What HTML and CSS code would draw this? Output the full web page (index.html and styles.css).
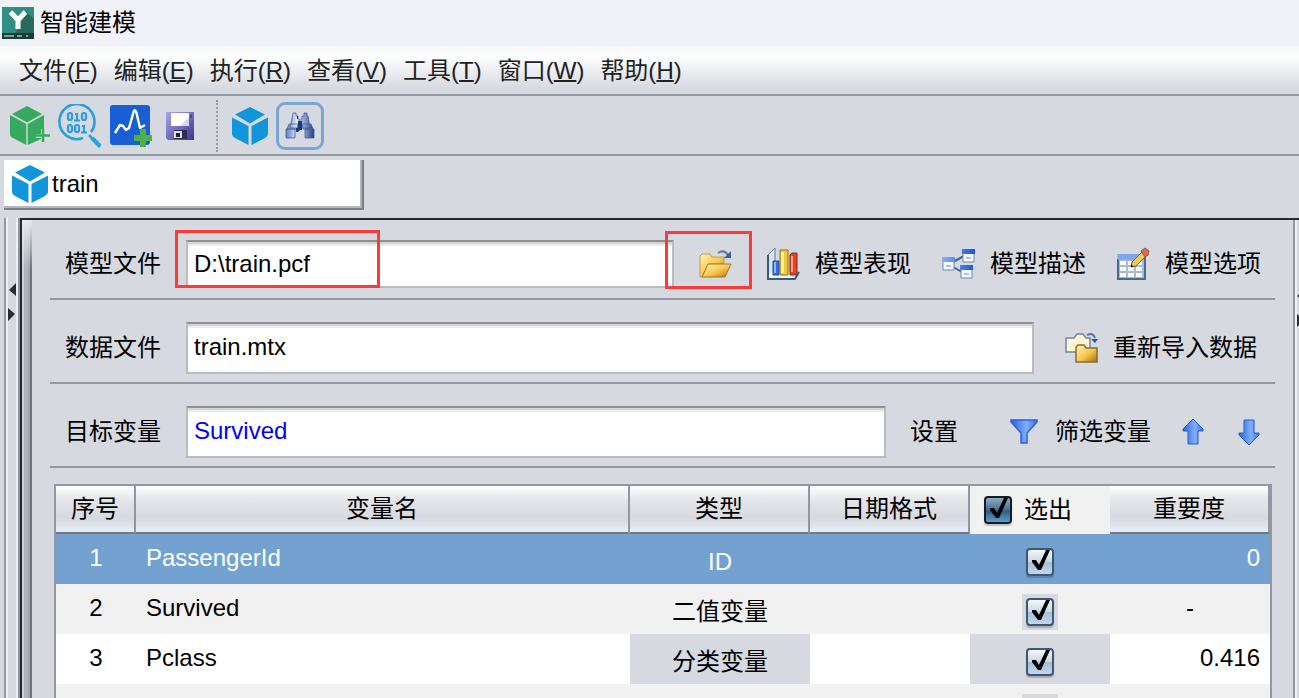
FILE: index.html
```html
<!DOCTYPE html>
<html lang="zh-CN">
<head>
<meta charset="utf-8">
<meta name="viewport" content="width=device-width, initial-scale=1">
<title>智能建模</title>
<link rel="stylesheet" href="styles.css">
</head>
<body>
<svg class="defs" aria-hidden="true">
  <defs>
    <linearGradient id="gold" x1="0" y1="0" x2="1" y2="1"><stop offset="0" stop-color="#fff3b0"/><stop offset=".55" stop-color="#f7c650"/><stop offset="1" stop-color="#a86a10"/></linearGradient>
    <linearGradient id="blue" x1="0" y1="0" x2="1" y2="0"><stop offset="0" stop-color="#2a62dc"/><stop offset=".6" stop-color="#7fb0ff"/><stop offset="1" stop-color="#3a6fe0"/></linearGradient>
    <linearGradient id="win" x1="0" y1="0" x2="1" y2="0"><stop offset="0" stop-color="#86b0f8"/><stop offset="1" stop-color="#1c56d8"/></linearGradient>
    <linearGradient id="disk" x1="0" y1="0" x2="1" y2="1"><stop offset="0" stop-color="#a9a5f0"/><stop offset="1" stop-color="#3b3590"/></linearGradient>
    <linearGradient id="tube" x1="0" y1="0" x2="1" y2="0"><stop offset="0" stop-color="#5f7fbd"/><stop offset=".4" stop-color="#e4ecfa"/><stop offset="1" stop-color="#1d3f86"/></linearGradient>
    <symbol id="cube" viewBox="0 0 36 40">
      <path fill="#1296db" d="M18 1 33 8.500 18 17.500 3 8.500zM0 11.500 16.500 20v19L3 32Q0 30.500 0 28zM36 11.500V28q0 2.500-3 4l-13.500 7V20z"/>
    </symbol>
  </defs>
</svg>

<header class="titlebar">
  <svg class="logo" viewBox="0 0 32 32" aria-hidden="true">
    <path fill="#2f8f80" d="M0 0h32v32H0z"/><path fill="#27695f" d="M24 4 32 12v14H13l4-5z"/><path fill="#163f3b" d="M0 26h32v6H0z"/>
    <path d="M8.500 5l7.500 8 7.500-8M16 12v10" fill="none" stroke="#fff" stroke-width="5"/><path d="M2 29h10M15 29h5M24 29h2" stroke="#8b9b98" stroke-width="2"/>
  </svg>
  <h1>智能建模</h1>
</header>

<nav class="menubar" aria-label="菜单">
  <button>文件(<u>F</u>)</button>
  <button>编辑(<u>E</u>)</button>
  <button>执行(<u>R</u>)</button>
  <button>查看(<u>V</u>)</button>
  <button>工具(<u>T</u>)</button>
  <button>窗口(<u>W</u>)</button>
  <button>帮助(<u>H</u>)</button>
</nav>

<div class="toolbar" role="toolbar" aria-label="工具栏">
  <button aria-label="新建模型"><svg width="40" height="40" viewBox="0 0 40 40">
    <path fill="#36ab60" d="M17 0 32 8 17 16.500 2 8zM0 9 16.300 18v21L2 31.500Q0 30.500 0 28zM17.700 18 34 9v14h-3v5h-5v4h5v1L17.700 39z"/>
    <path d="M33 23v13M26 29.500h14" stroke="#36ab60" stroke-width="2.500"/></svg></button>
  <button aria-label="查看数据"><svg width="44" height="44" viewBox="0 0 44 44" fill="none" stroke="#2a9fdd">
    <path d="M25 34A17.500 17.500 0 1 1 33 28M31 31l11 12" stroke-width="2.600"/><path d="M34 34l8 8" stroke-width="4"/>
    <g stroke-width="2.200"><rect x="10" y="9" width="4" height="7" rx="2"/><path d="M17 10h2v6M16 16.500h6"/><rect x="24" y="9" width="4" height="7" rx="2"/><rect x="10" y="21" width="4" height="7" rx="2"/><rect x="17" y="21" width="4" height="7" rx="2"/><path d="M24 22h2v6M23 28.500h6"/></g></svg></button>
  <button aria-label="新建分析"><svg width="44" height="42" viewBox="0 0 44 42">
    <rect width="40" height="40" rx="3" fill="#175fd2"/><path d="M5 28l5-8 3 1 3 4 3-2L23 9q1.500-7 3.500-1L30 23l5-3" fill="none" stroke="#fff" stroke-width="2.400" stroke-linejoin="round"/>
    <path d="M33 24v18M24 33h18" stroke="#4faf4b" stroke-width="6"/></svg></button>
  <button class="save" aria-label="保存"><svg width="28" height="28" viewBox="0 0 28 28">
    <path fill="url(#disk)" d="M0 0h28v28H2l-2-2z"/><path fill="#fff" d="M5 1h18v13H5z"/><path fill="#d8d6ee" d="M14 14 23 5v9z"/><path fill="#4c4690" d="M24 3h2v3h-2z"/><path fill="#302d50" d="M8 18h13v9H8z"/><path fill="#dedee8" d="M8 19h8v7H8z"/><path fill="#222" d="M10 21h4v4h-4z"/></svg></button>
  <span class="divider"></span>
  <button aria-label="模型"><svg width="36" height="40"><use href="#cube"/></svg></button>
  <button class="active" aria-label="查找"><svg width="30" height="28" viewBox="0 0 30 28">
    <g fill="url(#tube)" stroke="#41609c" stroke-width=".8"><path d="M8 1h3v3h2v3h1v9H5l2-9zM19 1h3v3h1l2 12h-9V7h1V4h2zM4 12h9l-1 5H2zM17 12h9l2 5H18zM1 17h9v9H1zM20 17h9v9h-9z"/></g><path fill="#1b3a7c" d="M13 9h4v9h-2l-2 2h-2v-4h2zM12 4h1v3h-1z"/></svg></button>
</div>

<div class="tabs" role="tablist">
  <button class="tab" role="tab" aria-selected="true"><svg width="36" height="40" aria-hidden="true"><use href="#cube"/></svg>train</button>
</div>

<main class="workspace">
  <div class="splitter">
    <svg width="8" height="40" viewBox="0 0 8 40" aria-hidden="true"><path fill="#2c2c2e" d="M8 1v13L1 8zM0 26l7 6-7 7z"/></svg>
  </div>
  <div class="frame">
    <div class="bevel"></div>
    <section class="content">
      <div class="row first">
        <label for="model">模型文件</label>
        <div class="field marked"><input id="model" type="text" value="D:\train.pcf"></div>
        <div class="actions">
          <button class="open" aria-label="打开"><svg width="34" height="30" viewBox="0 0 34 30">
            <path fill="url(#gold)" stroke="#b99b50" stroke-width="1" d="M1 28V7l2-2h8l2 3h12v7H10L3 28z"/><path fill="url(#gold)" stroke="#a4771c" stroke-width="1" d="M3 28 9 15h23l-6 13z"/>
            <path d="M19 4q6-4 10 2" fill="none" stroke="#5b7ba3" stroke-width="2"/><path fill="#3e6291" d="M32 2v7h-7z"/></svg></button>
          <button><svg width="34" height="34" viewBox="0 0 34 34">
            <path fill="#d9e3ec" stroke="#607c96" d="M1 8 8 1v24l-7 6z"/><path fill="#eef3f7" d="M1 32V28l5-3h26l-4 7z"/><path d="M1 8v24h27l4-7" fill="none" stroke="#395a7c" stroke-width="2"/>
            <path fill="#2f6ce4" stroke="#2550a8" d="M6 14h6v14H6z"/><path fill="#8fb4f8" d="M7 15h2v11H7z"/><path fill="#edcb37" stroke="#8b7418" d="M13 3h8v25h-8z"/><path fill="#fff0a0" d="M14 5h3v21h-3z"/><path fill="#d84a2d" stroke="#8e2718" d="M23 8l2-2h5v22h-7z"/><path fill="#ff9d7e" d="M24 9h2v16h-2z"/></svg>模型表现</button>
          <button><svg width="34" height="32" viewBox="0 0 34 32">
            <path d="M11 14 22 8M11 19l9 5" stroke="#3f6398" stroke-width="2"/>
            <g fill="#f6f9ff" stroke="#6887b8"><path d="M1 10h11v12H1zM21 2h11v12H21zM19 18h11v12H19z"/></g><path fill="url(#win)" d="M0 9h13v5H0zM20 1h13v5H20zM18 17h13v5H18z"/><path fill="#abc1e5" d="M4 17h5v2H4zM24 9h5v2h-5zM22 25h5v2h-5z"/></svg>模型描述</button>
          <button><svg width="34" height="34" viewBox="0 0 34 34">
            <path fill="#a8bbd9" d="M0 7h28v26H0z"/><path d="M1 12v20h27V10" fill="none" stroke="#49698f" stroke-width="2"/><path fill="#7da6f3" d="M1 7h26v6H1z"/><path fill="#fff" d="M3 14h6v4H3zM11 14h6v4h-6zM19 14h6v4h-6zM3 20h6v4H3zM11 20h6v4h-6zM19 20h6v4h-6zM3 26h6v4H3zM11 26h6v4h-6zM19 26h6v4h-6z"/>
            <path fill="#efcc4b" stroke="#746229" d="M14 20l1-5L26 4l4 4-11 11z"/><path fill="#d56b58" stroke="#9c5547" d="M24 4l4-3 4 3-1 4-3 2z"/><path fill="#222" d="M14 17v3h3z"/></svg>模型选项</button>
        </div>
      </div>
      <div class="row">
        <label for="data">数据文件</label>
        <div class="field"><input id="data" type="text" value="train.mtx"></div>
        <div class="actions import">
          <button><svg width="34" height="32" viewBox="0 0 34 32">
            <path fill="#fff5d5" stroke="#6e86ac" stroke-width="1.500" d="M1 20V6h8l3-4h6l3 4h4v14z"/><path d="M22 3q6-3 8 3" fill="none" stroke="#5478aa" stroke-width="2"/><path fill="#31578e" d="M26 7h7l-3 4z"/>
            <path fill="url(#gold)" stroke="#876c32" stroke-width="1.500" d="M11 30V15l2-2h6l2 3h11v14z"/></svg>重新导入数据</button>
        </div>
      </div>
      <div class="row">
        <label for="target">目标变量</label>
        <div class="field"><input id="target" class="link" type="text" value="Survived"></div>
        <div class="actions filter">
          <button class="set">设置</button>
          <button><svg width="32" height="28" viewBox="0 0 32 28"><path fill="url(#blue)" stroke="#2b62da" stroke-width="1.500" d="M2 2h26v2L18 15v10h-6V15L2 4z"/></svg>筛选变量</button>
          <button aria-label="上移"><svg width="24" height="28" viewBox="0 0 24 28"><path fill="url(#blue)" stroke="#2a5cc7" d="M11 1l10 10v2h-5v13H6V13H1v-2z"/></svg></button>
          <button aria-label="下移"><svg width="24" height="28" viewBox="0 0 24 28"><path fill="url(#blue)" stroke="#2a5cc7" d="M12 27 2 17v-2h5V2h10v13h5v2z"/></svg></button>
        </div>
      </div>

      <table>
        <colgroup><col class="c-no"><col><col class="c-type"><col class="c-date"><col class="c-pick"><col class="c-weight"></colgroup>
        <thead>
          <tr><th>序号</th><th>变量名</th><th>类型</th><th>日期格式</th><th class="pick"><label><input type="checkbox" checked>选出</label></th><th>重要度</th></tr>
        </thead>
        <tbody>
          <tr class="selected"><td class="no">1</td><td class="name">PassengerId</td><td class="type">ID</td><td></td><td class="check"><span><input type="checkbox" aria-label="PassengerId" checked></span></td><td class="weight">0</td></tr>
          <tr class="even"><td class="no">2</td><td class="name">Survived</td><td class="type">二值变量</td><td></td><td class="check"><span><input type="checkbox" aria-label="Survived" checked></span></td><td class="weight none">-</td></tr>
          <tr><td class="no">3</td><td class="name">Pclass</td><td class="type shade">分类变量</td><td></td><td class="check shade"><span><input type="checkbox" aria-label="Pclass" checked></span></td><td class="weight">0.416</td></tr>
          <tr class="even"><td></td><td></td><td></td><td></td><td class="check"><span></span></td><td></td></tr>
        </tbody>
      </table>
    </section>
    <div class="edge"><svg width="8" height="40" viewBox="0 0 8 40" aria-hidden="true"><path fill="#2c2c2e" d="M8 1v13L0 8zM0 26l7 6-7 7z"/></svg></div>
  </div>
</main>
</body>
</html>
```
FILE: styles.css
```css
*, *::before, *::after { box-sizing: border-box; }
body {
  --bg: #d6d9e0;
  --line: #9297a1;
  margin: 0;
  height: 100vh;
  overflow: hidden;
  display: flex;
  flex-direction: column;
  background: var(--bg);
  color: #000;
  font: 24px/32px "Liberation Sans", "Noto Sans CJK SC", sans-serif;
}
button, input { font: inherit; color: inherit; }
button {
  display: flex;
  align-items: center;
  padding: 0;
  border: 0;
  background: none;
  white-space: nowrap;
}
svg { display: block; flex: none; }
.defs { position: absolute; width: 0; height: 0; }

.titlebar {
  display: flex;
  align-items: center;
  gap: 6px;
  flex: none;
  height: 46px;
  padding-left: 2px;
  background: #f0f2f8;
}
.logo { width: 32px; height: 32px; }
h1 { margin: 0; font: inherit; }

.menubar {
  display: flex;
  align-items: center;
  gap: 16px;
  flex: none;
  height: 50px;
  padding: 2px 0 0 19px;
  border-bottom: 2px solid var(--line);
  background: linear-gradient(#f7f9f9, #fcfdfd 25%, #eceef1 50%, #d6d9e0 90%);
  color: #222;
}
.menubar u { text-decoration-thickness: 2px; text-underline-offset: 1px; }

.toolbar {
  display: flex;
  align-items: center;
  gap: 8px;
  flex: none;
  height: 60px;
  padding: 2px 0 0 10px;
  border-bottom: 2px solid var(--line);
}
.toolbar .save { margin: 0 14px 0 4px; }
.divider { height: 52px; margin-right: 6px; border-left: 2px dotted var(--line); }
.toolbar .active {
  justify-content: center;
  width: 48px;
  height: 48px;
  border: 3px solid #7ba6d3;
  border-radius: 9px;
}

.tabs { flex: none; height: 62px; padding: 4px; }
.tab {
  gap: 4px;
  width: 360px;
  height: 50px;
  padding-left: 8px;
  border-right: 2px solid #7d7f83;
  border-bottom: 2px solid #7d7f83;
  background: #fff;
  box-shadow: inset -2px -2px #b5b7ba;
}

.workspace { display: flex; flex: 1; min-height: 0; }
.splitter {
  width: 16px;
  margin-left: 4px;
  padding: 64px 0 0 2px;
  border-left: 2px solid var(--line);
  box-shadow: inset 2px 0 #eef0f5, inset -2px 0 #8e949f, inset -4px 0 #eef0f5;
}
.frame {
  display: flex;
  flex: 1;
  min-width: 0;
  border-top: 2px solid #26292e;
}
.bevel {
  flex: none;
  width: 12px;
  border-left: 2px solid #26292e;
  background: linear-gradient(#e8eaef, transparent 50px), linear-gradient(90deg, #cdd2d8 20%, #aeb4bd 20% 60%, #9da3ae 60% 80%, #6b7280 80%);
}
.content { flex: 1; min-width: 0; padding: 0 18px; }
.edge { flex: none; width: 6px; padding: 68px 0 0 2px; border-left: 2px solid var(--line); box-shadow: inset 2px 0 #eef0f5; overflow: hidden; }

.row {
  display: flex;
  align-items: center;
  height: 84px;
  padding-top: 14px;
  border-bottom: 2px solid var(--line);
}
.row.first { height: 80px; padding-top: 10px; }
.row > label { flex: none; width: 136px; padding-left: 15px; }
.field { position: relative; flex: 1; min-width: 0; }
.field input {
  display: block;
  width: 100%;
  height: 52px;
  padding: 0 6px 2px;
  border: 2px solid #b9bbbd;
  border-top-color: #8e9093;
  border-radius: 0;
  outline: 0;
  background: #fff;
  box-shadow: inset 0 2px #d5d5d5, inset 0 4px #ececec;
}
.first .field input { height: 48px; padding-bottom: 0; }
.field .link { color: #00f; }
.marked::after, .open::after {
  content: "";
  position: absolute;
  border: 3px solid #fb3b3b;
  pointer-events: none;
}
.marked::after { left: -11px; top: -10px; width: 205px; height: 58px; }
.open { position: relative; }
.open::after { left: -34px; top: -18px; width: 87px; height: 58px; }

.actions { display: flex; align-items: center; gap: 31px; flex: none; padding: 0 14px 0 25px; }
.first .open { margin-right: 3px; }
.actions button { gap: 14px; }
.actions.import { padding: 0 18px 0 31px; }
.actions.filter { padding: 0 14px 0 24px; }
.actions .set { margin-right: 20px; }

table {
  width: calc(100% - 7px);
  margin: 16px 3px 0 4px;
  table-layout: fixed;
  border-collapse: separate;
  border-spacing: 0;
  border: 2px solid var(--line);
  border-bottom: 0;
  background: #fff;
}
.c-no { width: 80px; }
.c-type { width: 180px; }
.c-date, .c-weight { width: 160px; }
.c-pick { width: 140px; }
th {
  height: 48px;
  padding: 0;
  border-right: 2px solid #92979f;
  border-bottom: 2px solid #757981;
  background: linear-gradient(#fff, #e3e5e9 30%, #d6d9df 70%, #e9eef8);
  font-weight: normal;
}
.pick { border: 0; background: #f1f1f1; }
.pick label { display: flex; align-items: center; gap: 12px; padding-left: 14px; }
td { height: 50px; padding: 0 10px 2px; }
.no { text-align: center; }
.type, .check { padding: 6px 0 0; text-align: center; }
.weight { text-align: right; }
.weight.none { text-align: center; }
.selected { background: #73a2d1; color: #fff; }
.even { background: #f1f1f1; }
.shade { background: var(--bg); }
.check span {
  display: flex;
  width: 36px;
  height: 36px;
  margin: auto;
  padding: 4px;
}
.even .check span { background: var(--bg); }
input[type="checkbox"] {
  appearance: none;
  flex: none;
  width: 28px;
  height: 28px;
  margin: 0;
  border: 2px solid #3d5873;
  border-radius: 4px;
  background: linear-gradient(#f5f8fa, #cad8e4 48%, #a9bfd3 52%, #bfd7ed);
  box-shadow: 0 2px 1px #0003;
}
input[type="checkbox"]::before {
  content: "";
  display: block;
  width: 24px;
  height: 24px;
  background: #000;
  clip-path: polygon(4px 10px, 8px 10px, 11px 15px, 18px 0, 22px 0, 13px 20px, 10px 20px, 4px 12px);
}
.pick input[type="checkbox"] {
  border-color: #101d29;
  background: linear-gradient(#8eaac3, #4d7697 45%, #315d80 55%, #5f9bca);
}
```
